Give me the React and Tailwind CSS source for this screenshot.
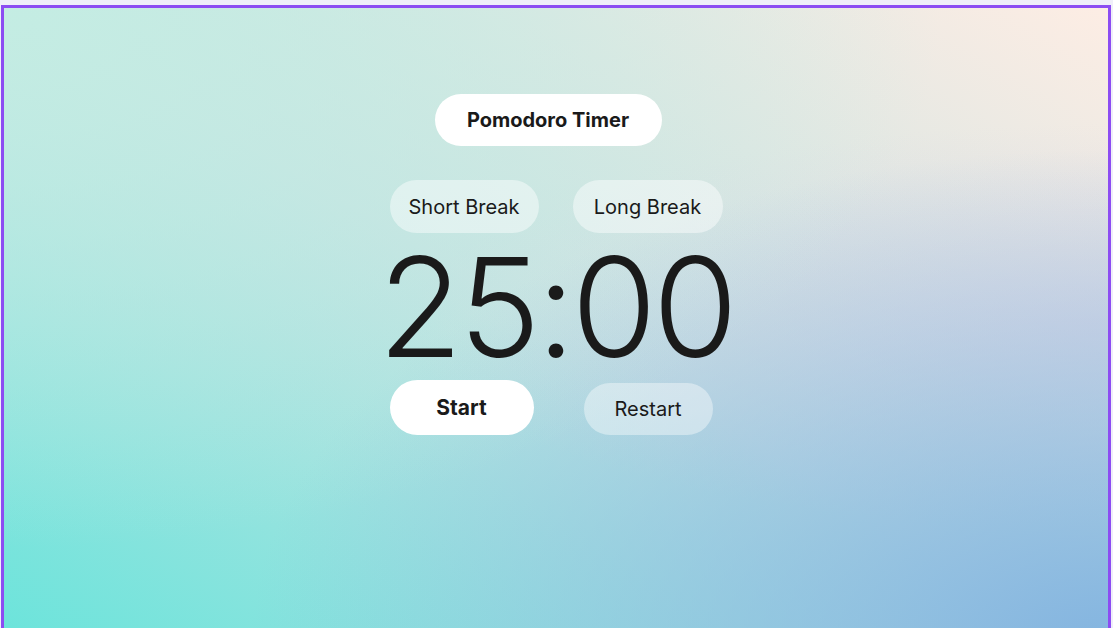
export default function App() {
  const font = { fontFamily: 'Inter, "Noto Sans", sans-serif' };
  return (
    <div className="w-full h-[628px] overflow-hidden bg-[#efeef9] pt-[5px] pl-[1px] pr-[2px]" style={font}>
      <div className="h-[640px] border-[3px] border-b-0 border-[#8c4cf2] bg-[radial-gradient(ellipse_at_top_left,rgba(196,237,227,0.95),rgba(196,237,227,0)_60%),radial-gradient(ellipse_at_bottom_right,rgba(128,178,224,0.95),rgba(128,178,224,0)_55%),radial-gradient(ellipse_at_right,rgba(222,214,230,0.7),rgba(222,214,230,0)_45%),linear-gradient(to_top_right,#6ae4db,#c4e2e2_50%,#fdede4)]">
        <div className="mx-auto w-[333px] flex flex-col items-start pt-[86px] text-[#1a1a1a]">
          <div className="ml-[45px] w-[227px] h-[52px] rounded-full bg-white flex items-center justify-center text-[20px] font-bold">
            Pomodoro Timer
          </div>
          <div className="mt-[34px] flex gap-[34px]">
            <button className="w-[149px] h-[53px] rounded-full bg-white/45 text-[20px] flex items-center justify-center">
              Short Break
            </button>
            <button className="w-[150px] h-[53px] rounded-full bg-white/45 text-[20px] flex items-center justify-center">
              Long Break
            </button>
          </div>
          <div className="mt-[5px] self-center whitespace-nowrap text-[138px] leading-none font-light tracking-[-4px]">
            25:00
          </div>
          <div className="mt-[4px] flex items-end gap-[50px]">
            <button className="w-[144px] h-[55px] rounded-full bg-white text-[21px] font-bold flex items-center justify-center">
              Start
            </button>
            <button className="w-[129px] h-[52px] rounded-full bg-white/40 text-[20px] flex items-center justify-center">
              Restart
            </button>
          </div>
        </div>
      </div>
    </div>
  );
}
